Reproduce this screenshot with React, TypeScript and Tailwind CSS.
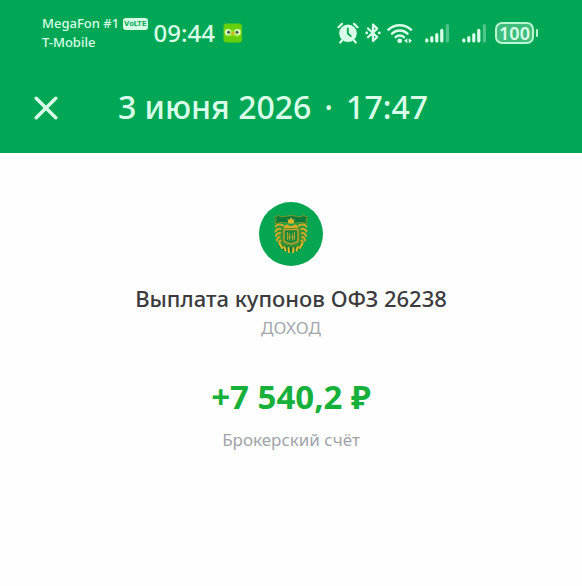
const AlarmIcon = () => (
    <svg viewBox="0 0 22 22" className="h-[22px] w-[22px]" fill="none" stroke="currentColor" strokeLinecap="round">
        <path d="M1.5 5.2 5 1.8M20.5 5.2 17 1.8M5 18.5l-1.8 2M17 18.5l1.8 2" strokeWidth="2.2" />
        <circle cx="11" cy="11.2" r="8.8" fill="currentColor" stroke="none" />
        <path d="M10.8 6.5v5l3 2.6" stroke="#02a755" strokeWidth="1.8" />
    </svg>
);

const BluetoothIcon = () => (
    <svg viewBox="0 0 16 22" className="h-[22px] w-4" fill="none" stroke="currentColor" strokeWidth="2.2" strokeLinecap="round" strokeLinejoin="round">
        <path d="M3 6.5 12.2 15 8 19.2V2.6l4.2 4L3 15.2" />
        <path d="M1.6 10.9h.2M14.2 10.9h.2" strokeWidth="2.6" />
    </svg>
);

const WifiIcon = () => (
    <svg viewBox="0 0 26 22" className="h-[22px] w-[26px]" fill="none" stroke="currentColor" strokeWidth="2.5" strokeLinecap="round">
        <path d="M1.5 7.6a16.4 16.4 0 0 1 22.5 0" />
        <path d="M5 11.6a11.3 11.3 0 0 1 15.5 0" />
        <path d="M8.6 15.2a6 6 0 0 1 8.3 0" />
        <circle cx="12.7" cy="18.8" r="2.4" fill="currentColor" stroke="none" />
        <path d="m20.3 16.2-3.2 2.5 3.2 2.5zM21.8 16.2l3.2 2.5-3.2 2.5z" fill="currentColor" stroke="none" />
    </svg>
);

const SignalIcon = () => (
    <svg viewBox="0 0 25 22" className="h-[22px] w-[25px]" fill="none" stroke="currentColor" strokeWidth="3.2" strokeLinecap="round">
        <path d="M1.8 17.8v1.2M6.8 15.6v3.4M11.8 12.6V19M16.8 8.4V19" />
        <path d="M22.4 3.6V19" opacity="0.35" />
    </svg>
);

const OwlIcon = () => (
    <svg viewBox="0 0 20 20" className="h-5 w-5">
        <rect x="0.5" y="0.5" width="18.5" height="19" rx="3" fill="#66cf0d" />
        <path d="M1.5 6.2c3-1.2 5.6-.9 8.2.9 2.6-1.8 5.4-2.1 8.3-.9v5.2c-2.2 2.9-5.6 3-8.3.8-2.7 2.2-6 2.1-8.2-.8z" fill="#8fe32c" />
        <ellipse cx="5" cy="9.3" rx="2.9" ry="3" fill="#e4fbd0" />
        <ellipse cx="14.6" cy="9.3" rx="2.9" ry="3" fill="#e4fbd0" />
        <circle cx="5.6" cy="9.2" r="1.5" fill="#35613a" />
        <circle cx="14" cy="9.2" r="1.5" fill="#35613a" />
        <path d="M7.9 9.2h3.8l-1.9 3.2z" fill="#eea71c" />
    </svg>
);

const CloseIcon = () => (
    <svg viewBox="0 0 24 24" className="h-6 w-6" fill="none" stroke="currentColor" strokeWidth="3.4" strokeLinecap="round">
        <path d="m2.2 2.2 19.6 19.6M21.8 2.2 2.2 21.8" />
    </svg>
);

// Ministry crest: eagle with a shield under a ribbon, wreath at the bottom
const Emblem = () => (
    <svg viewBox="0 0 64 64" className="h-16 w-16" fill="none">
        <circle cx="32" cy="32" r="32" fill="#05a551" />
        <path d="M15.5 15 20 13.5l2 1.5 10-1.5 10 1.500 2-1.500 4.500 1.500-1.500 3 1 3.500-6-1-10 .5-10-.5-6 1 1-3.500z" fill="#087b3c" stroke="#7c9424" strokeWidth="1" />
        <path d="M28.5 16.5l1.800 1.600 1.700-2.900 1.700 2.900 1.800-1.600-1 5h-5z" fill="#dcb82a" />
        <path d="M19 25h26l-1 12-3 8-9 4-9-4-3-8z" fill="#4f8b2a" opacity="0.7" />
        <g stroke="#d9a622" strokeWidth="2" strokeLinecap="round">
            <path d="M24 23.500c-3-1.500-6-1-7.500 1M21.500 27c-2-.5-4 .5-5 2.500M21 31c-2 0-3.500 1-4 3M20.500 35c-1.500.5-2.500 1.500-2.500 3.500M21.500 38.500c-1 .5-1.500 1.500-1 3" />
            <path d="M40 23.500c3-1.500 6-1 7.500 1M42.500 27c2-.5 4 .5 5 2.500M43 31c2 0 3.500 1 4 3M43.500 35c1.500.5 2.500 1.500 2.500 3.500M42.500 38.500c1 .5 1.500 1.500 1 3" />
        </g>
        <path d="M25.500 23.500c1.500-1.700 4-1.200 5.500.5h2c1.500-1.700 4-2.200 5.500-.5l1 2.500h-15z" fill="#dba826" />
        <path d="M25 27.500h14v11.500c-1 1.500-4 2-7 3-3-1-6-1.500-7-3z" fill="#178a3c" stroke="#c9a02a" strokeWidth="1.400" />
        <path d="M28.500 30v8M30.500 31.500v7M33.500 31.500v7M35.500 30v8M28.500 35h7" stroke="#a9a42b" strokeWidth="1.100" />
        <path d="M20.500 42c6 3.500 17 3.500 23 0l1 2.200C38 52 26 52 19.500 44.200z" fill="#127537" />
        <path d="m21 42.500 2.200 3.500M25.300 45l1.200 3.500M29.500 46l.4 4M34.500 46l-.4 4M38.700 45l-1.200 3.500M43 42.500l-2.200 3.500" stroke="#efc023" strokeWidth="2" strokeLinecap="round" />
    </svg>
);

const StatusBar = () => (
    <div className="flex h-[66px] items-center pr-11 pl-[42px]">
        <div className="mr-1.5 text-[13px] leading-[19px] font-medium">
            <div className="flex items-center gap-1">
                <span>MegaFon #1</span>
                <span className="flex h-3 items-center justify-center rounded-[3px] bg-[#d5ffe5] px-px font-['Roboto',sans-serif] text-[8px] leading-3 font-bold text-[#02a755]">VoLTE</span>
            </div>
            <div>T-Mobile</div>
        </div>
        <div className="mr-2 text-[24px] leading-8 font-medium">09:44</div>
        <OwlIcon />
        <div className="ml-auto flex items-center">
            <AlarmIcon />
            <div className="ml-1.5"><BluetoothIcon /></div>
            <div className="ml-1.5"><WifiIcon /></div>
            <div className="ml-3"><SignalIcon /></div>
            <div className="ml-3"><SignalIcon /></div>
            <div className="ml-2 flex items-center gap-0.5">
                <div className="flex h-[22px] w-[39px] items-center justify-center rounded-[7px] border-2 border-[#b9f5d0] bg-[#3fbd7c] text-[18px] leading-5 font-semibold">100</div>
                <div className="h-2 w-0.5 rounded-full bg-[#b9f5d0]" />
            </div>
        </div>
    </div>
);

export default function App() {
    return (
        <div className="min-h-screen bg-[#fefefe] font-['Noto_Sans',sans-serif]">
            <header className="bg-[#02a755] text-[#d9ffe8]">
                <StatusBar />
                <div className="flex h-[87px] items-start gap-[60px] pt-5 pl-[34px]">
                    <button type="button" aria-label="Закрыть" className="mt-2.5">
                        <CloseIcon />
                    </button>
                    <h1 className="flex gap-[13px] text-[32px] leading-[42px] font-medium whitespace-nowrap">
                        <span>3 июня 2026</span>
                        <span>·</span>
                        <span>17:47</span>
                    </h1>
                </div>
            </header>

            <main className="flex flex-col items-center pt-[49px] text-center">
                <Emblem />
                <h2 className="mt-4 text-[22px] leading-8 font-medium text-[#3b3b3d]">Выплата купонов ОФЗ 26238</h2>
                <p className="text-[17px] leading-7 text-[#a3a7ac]">ДОХОД</p>
                <p className="mt-8 text-[33px] leading-[46px] font-bold text-[#16b03b]">+7 540,2 ₽</p>
                <p className="mt-1.5 text-[17px] leading-7 text-[#a0a4a9]">Брокерский счёт</p>
            </main>
        </div>
    );
}
